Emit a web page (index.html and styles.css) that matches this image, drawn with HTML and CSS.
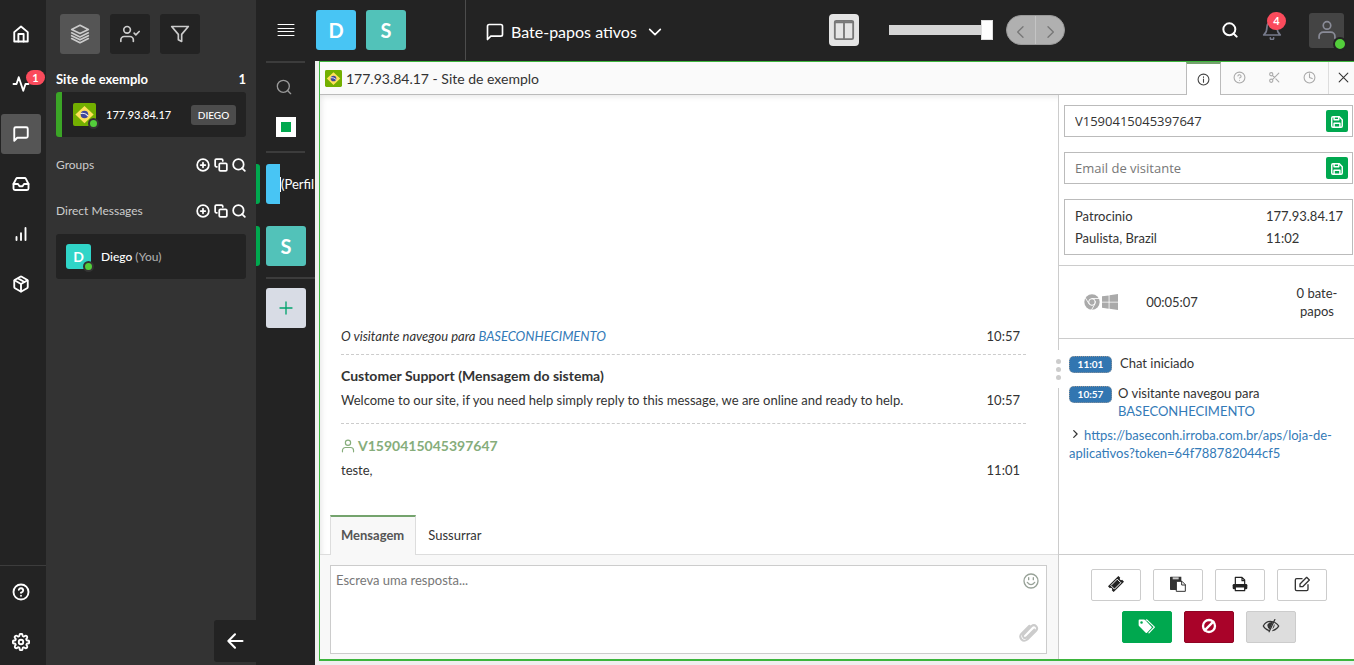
FILE: index.html
```html
<!DOCTYPE html>
<html lang="pt">
<head>
<meta charset="utf-8">
<title>Bate-papos ativos</title>
<link rel="stylesheet" href="styles.css">
</head>
<body>
<svg class="defs" aria-hidden="true">
  <symbol id="home" viewBox="0 0 24 24"><path d="M3 9.500l9-7.500 9 7.500V22H3z"/><path d="M8.500 22V12h7v10"/></symbol>
  <symbol id="activity" viewBox="0 0 24 24"><path d="M22 12h-4l-3 9L9 3l-3 9H2"/></symbol>
  <symbol id="chat" viewBox="0 0 24 24"><path d="M21 15a2 2 0 0 1-2 2H7l-4 4V5a2 2 0 0 1 2-2h14a2 2 0 0 1 2 2z"/></symbol>
  <symbol id="inbox" viewBox="0 0 24 24"><path d="M22 12h-6l-2 3h-4l-2-3H2"/><path d="M5.450 5.110L2 12v6a2 2 0 0 0 2 2h16a2 2 0 0 0 2-2v-6l-3.450-6.890A2 2 0 0 0 16.760 4H7.240a2 2 0 0 0-1.790 1.110z"/></symbol>
  <symbol id="bars" viewBox="0 0 24 24"><path d="M18 20V4M12 20v-9M6 20v-4"/></symbol>
  <symbol id="box" viewBox="0 0 24 24"><path d="M16.500 9.400l-9-5.190M21 16V8a2 2 0 0 0-1-1.730l-7-4a2 2 0 0 0-2 0l-7 4A2 2 0 0 0 3 8v8a2 2 0 0 0 1 1.730l7 4a2 2 0 0 0 2 0l7-4A2 2 0 0 0 21 16z"/><path d="M3.270 6.960L12 12.010l8.730-5.050M12 22.080V12"/></symbol>
  <symbol id="help" viewBox="0 0 24 24"><circle cx="12" cy="12" r="10"/><path d="M9.090 9a3 3 0 0 1 5.830 1c0 2-3 3-3 3M12 17h.010"/></symbol>
  <symbol id="gear" viewBox="0 0 24 24"><circle cx="12" cy="12" r="3"/><path d="M19.400 15a1.650 1.650 0 0 0 .33 1.820l.06.06a2 2 0 1 1-2.830 2.830l-.06-.06a1.650 1.650 0 0 0-2.800 1.170V21a2 2 0 0 1-4 0v-.09a1.650 1.650 0 0 0-2.900-1.260l-.06.06a2 2 0 1 1-2.830-2.830l.06-.06A1.650 1.650 0 0 0 3.090 14H3a2 2 0 0 1 0-4h.09a1.650 1.650 0 0 0 1.260-2.900l-.06-.06a2 2 0 1 1 2.830-2.830l.06.06A1.650 1.650 0 0 0 10 3.090V3a2 2 0 0 1 4 0v.09a1.650 1.650 0 0 0 2.820 1.180l.06-.06a2 2 0 1 1 2.830 2.830l-.06.06A1.650 1.650 0 0 0 20.910 10H21a2 2 0 0 1 0 4h-.09a1.650 1.650 0 0 0-1.510 1z"/></symbol>
  <symbol id="layers" viewBox="0 0 24 24"><path d="M12 1.500L2 6.500l10 5 10-5zM2 17.500l10 5 10-5M2 10.500l10 5 10-5M2 14l10 5 10-5"/></symbol>
  <symbol id="usercheck" viewBox="0 0 24 24"><path d="M16 21v-2a4 4 0 0 0-4-4H5a4 4 0 0 0-4 4v2"/><circle cx="8.500" cy="7" r="4"/><path d="M17 11l2 2 4-4"/></symbol>
  <symbol id="filter" viewBox="0 0 24 24"><path d="M22 3H2l8 9.460V19l4 2v-8.540z"/></symbol>
  <symbol id="pluscircle" viewBox="0 0 24 24"><circle cx="12" cy="12" r="10"/><path d="M12 8v8M8 12h8"/></symbol>
  <symbol id="copy" viewBox="0 0 24 24"><rect x="9" y="9" width="13" height="13" rx="2"/><path d="M5 15H4a2 2 0 0 1-2-2V4a2 2 0 0 1 2-2h9a2 2 0 0 1 2 2v1"/></symbol>
  <symbol id="search" viewBox="0 0 24 24"><circle cx="11" cy="11" r="9"/><path d="M22 22l-4.700-4.700"/></symbol>
  <symbol id="left" viewBox="0 0 24 24"><path d="M21 12H4M12 20l-8-8 8-8"/></symbol>
  <symbol id="menu" viewBox="0 0 18 14"><path d="M1 1.500h16M1 5.500h16M1 8.500h16M1 12.500h16"/></symbol>
  <symbol id="down" viewBox="0 0 24 24"><path d="M4 8l8 8 8-8"/></symbol>
  <symbol id="prev" viewBox="0 0 24 24"><path d="M15 4l-8 8 8 8"/></symbol>
  <symbol id="next" viewBox="0 0 24 24"><path d="M9 4l8 8-8 8"/></symbol>
  <symbol id="columns" viewBox="0 0 24 24"><rect x="2" y="2" width="20" height="20" rx="1.500"/><path d="M2 3.500h20M12 3v19"/></symbol>
  <symbol id="bell" viewBox="0 0 24 24"><path d="M18 8A6 6 0 0 0 6 8c0 7-2 8-4 10h20c-2-2-4-3-4-10M14 21.500a2 2 0 0 1-4 0"/></symbol>
  <symbol id="user" viewBox="0 0 24 24"><path d="M2.500 22v-2.500a5 5 0 0 1 5-5h9a5 5 0 0 1 5 5V22"/><circle cx="12" cy="6.500" r="4.500"/></symbol>
  <symbol id="info" viewBox="0 0 24 24"><circle cx="12" cy="12" r="10"/><path d="M12 17v-6M12 7v1"/></symbol>
  <symbol id="scissors" viewBox="0 0 24 24"><circle cx="6" cy="6" r="3"/><circle cx="6" cy="18" r="3"/><path d="M20 4L8.120 15.880M14.500 14.500L20 20M8.120 8.120L12 12"/></symbol>
  <symbol id="clock" viewBox="0 0 24 24"><circle cx="12" cy="12" r="10"/><path d="M12 5v7l5 2"/></symbol>
  <symbol id="close" viewBox="0 0 24 24"><path d="M4 4l16 16M20 4L4 20"/></symbol>
  <symbol id="plus" viewBox="0 0 24 24"><path d="M12 3v18M3 12h18"/></symbol>
  <symbol id="save" viewBox="0 0 24 24"><path d="M19 21H5a2 2 0 0 1-2-2V5a2 2 0 0 1 2-2h11l5 5v11a2 2 0 0 1-2 2z"/><path d="M17 21v-7H7v7M7 3v5h8V4"/></symbol>
  <symbol id="flag" viewBox="0 0 24 24"><rect width="24" height="24" rx="2" fill="#73af00"/><path d="M12 3l9.500 9-9.500 9-9.500-9z" fill="#ffe15a"/><circle cx="12" cy="12" r="4" fill="#41479b"/><path d="M8.300 10.900c2.500-.5 5.500.5 7.300 2.600" fill="none" stroke="#f5f5f5" stroke-width="1.200"/></symbol>
  <symbol id="chrome" viewBox="0 0 24 24"><circle cx="12" cy="12" r="11.500" fill="#aaa"/><circle cx="12" cy="12" r="5" fill="#aaa" stroke="#fff" stroke-width="1.500"/><path d="M12 6.800h10.500M7.500 14.600L2 5.800M16.500 14.600L11.500 23.500" stroke="#fff" stroke-width="1.300"/></symbol>
  <symbol id="windows" viewBox="0 0 24 24"><path fill="#aaa" d="M0 3.500l10-1.400v9.400H0zM11.200 1.900L24 0v11.500H11.200zM0 12.700h10v9.400L0 20.700zM11.200 12.700H24V24l-12.800-1.800z"/></symbol>
  <symbol id="ticket" viewBox="0 0 24 24"><g transform="rotate(-45 12 12)"><path fill="#222" d="M1 6h22v4a2 2 0 0 0 0 4v4H1v-4a2 2 0 0 0 0-4z"/><path d="M5.500 8.200h13v7.600h-13z" fill="none" stroke="#fff" stroke-width="1.400"/></g></symbol>
  <symbol id="paste" viewBox="0 0 24 24"><path fill="#333" d="M0 2q0-1 1-1h16v8h-6v12H1q-1 0-1-1z"/><path fill="#ccc" d="M4 2h9v3H4z"/><path fill="#fff" stroke="#333" stroke-width="1.500" d="M10 8h8l5 5v10H10zM17.500 8v5.500H23"/></symbol>
  <symbol id="printer" viewBox="0 0 24 24"><path fill="#fff" stroke="#222" stroke-width="1.800" d="M5 13V2h10l4 4v7M15 2v5h4"/><rect x="1" y="12" width="22" height="8" rx="2" fill="#222"/><path fill="#fff" stroke="#222" stroke-width="1.800" d="M5 16.500h14V22H5z"/></symbol>
  <symbol id="edit" viewBox="0 0 24 24"><path d="M12 4H4a2 2 0 0 0-2 2v14a2 2 0 0 0 2 2h15a2 2 0 0 0 2-2v-7M9 16v-4L19 2l4 4-10 10z"/></symbol>
  <symbol id="tags" viewBox="0 0 28 24"><path fill="#fff" fill-rule="evenodd" d="M1 3.500Q1 2 2.500 2H9q1.500 0 2.500 1l9.500 10q1 1 0 2l-7 7.500q-1 1-2 0L2 12.500Q1 11.500 1 10zM5.500 4.500a2 2 0 1 0 0 4 2 2 0 0 0 0-4z"/><path fill="none" stroke="#fff" stroke-width="1.800" d="M13 2.500q1 0 2 1l10.500 10.300-8.500 9"/></symbol>
  <symbol id="ban" viewBox="0 0 24 24"><circle cx="12" cy="12" r="9"/><path d="M18.500 5.500l-13 13"/></symbol>
  <symbol id="eyeoff" viewBox="0 0 28 24"><path fill="none" stroke="#333" stroke-width="2" d="M17 5.500Q7 3 2 12q3 5.500 9 7M20 6.500q4 2 6 5.500-3 5.500-9 7M20 2L11 21"/><path fill="#333" d="M17 6L12 17Q7.500 14 8.500 9.500 12 5 17 6zM19 9q2 4-3 8z"/></symbol>
  <symbol id="smile" viewBox="0 0 24 24"><circle cx="12" cy="12" r="10.500"/><path d="M6.500 14q5.500 7 11 0M8.500 7v3M15.500 7v3"/></symbol>
  <symbol id="clip" viewBox="0 0 24 24"><path d="M18.500 9l-9.500 9.500q-2 1.500-3.500 0-1.500-2 0-3.500L15 5q3-2.500 5.500 0 2.500 3 0 5.500L10 21q-4 3-7 0-3-3.500 0-7L12.500 4.500"/></symbol>
</svg>

<div class="app">
  <nav class="rail" aria-label="Principal">
    <button aria-label="Início"><svg class="i18"><use href="#home"/></svg></button>
    <button aria-label="Atividade"><svg class="i18"><use href="#activity"/></svg><span class="badge one">1</span></button>
    <button class="current" aria-label="Bate-papos"><svg class="i18"><use href="#chat"/></svg></button>
    <button aria-label="Entrada"><svg class="i18"><use href="#inbox"/></svg></button>
    <button aria-label="Relatórios"><svg class="i18"><use href="#bars"/></svg></button>
    <button aria-label="Pacotes"><svg class="i18"><use href="#box"/></svg></button>
    <div class="railend">
      <button aria-label="Ajuda"><svg class="i18"><use href="#help"/></svg></button>
      <button aria-label="Configurações"><svg class="i18"><use href="#gear"/></svg></button>
    </div>
  </nav>

  <aside class="panel">
    <div class="filters">
      <button class="on" aria-label="Todos"><svg class="i20"><use href="#layers"/></svg></button>
      <button aria-label="Meus"><svg class="i20"><use href="#usercheck"/></svg></button>
      <button aria-label="Filtrar"><svg class="i20"><use href="#filter"/></svg></button>
    </div>
    <div class="site"><span>Site de exemplo</span><span>1</span></div>
    <div class="visitor">
      <span class="mark"><svg class="flag24"><use href="#flag"/></svg><i class="dot"></i></span>
      <span class="ip">177.93.84.17</span><span class="agent">DIEGO</span>
    </div>
    <div class="section"><span>Groups</span>
      <div><button aria-label="Adicionar"><svg><use href="#pluscircle"/></svg></button><button aria-label="Copiar"><svg><use href="#copy"/></svg></button><button aria-label="Buscar"><svg><use href="#search"/></svg></button></div></div>
    <div class="section second"><span>Direct Messages</span>
      <div><button aria-label="Adicionar"><svg><use href="#pluscircle"/></svg></button><button aria-label="Copiar"><svg><use href="#copy"/></svg></button><button aria-label="Buscar"><svg><use href="#search"/></svg></button></div></div>
    <div class="direct"><span class="mark letter">D<i class="dot"></i></span><span>Diego <em>(You)</em></span></div>
    <button class="collapse" aria-label="Recolher"><svg class="i20"><use href="#left"/></svg></button>
  </aside>

  <div class="work">
    <header class="top">
      <div class="brand">
        <button class="bare" aria-label="Menu"><svg class="menuicon"><use href="#menu"/></svg></button>
        <button class="tile blue">D</button><button class="tile teal">S</button>
      </div>
      <button class="bare heading"><svg class="i20"><use href="#chat"/></svg><span>Bate-papos ativos</span><svg class="i16"><use href="#down"/></svg></button>
      <div class="viewtools">
        <button class="colbtn" aria-label="Colunas"><svg class="i22"><use href="#columns"/></svg></button>
        <input type="range" class="slider" value="100" aria-label="Largura">
        <div class="pill"><button aria-label="Anterior"><svg class="i16"><use href="#prev"/></svg></button><button aria-label="Próximo"><svg class="i16"><use href="#next"/></svg></button></div>
      </div>
      <div class="account">
        <button class="bare" aria-label="Buscar"><svg class="i16 strong"><use href="#search"/></svg></button>
        <button class="bare bell" aria-label="Notificações"><svg class="i20"><use href="#bell"/></svg><span class="badge four">4</span></button>
        <button class="avatar" aria-label="Conta"><svg class="i20"><use href="#user"/></svg><i class="dot big"></i></button>
      </div>
    </header>

    <div class="below">
      <div class="strip">
        <hr>
        <button class="bare find" aria-label="Buscar"><svg class="i16"><use href="#search"/></svg></button>
        <input type="checkbox" class="tick" checked aria-label="Selecionar todos">
        <hr>
        <div class="row"><i></i><span class="chip"></span><span class="perfil">(Perfil</span></div>
        <div class="row"><i></i><button class="tile teal">S</button></div>
        <hr class="wide">
        <button class="add" aria-label="Adicionar"><svg><use href="#plus"/></svg></button>
      </div>

      <main class="window">
        <div class="titlebar">
          <svg class="flag17"><use href="#flag"/></svg><h1>177.93.84.17 - Site de exemplo</h1>
          <div class="tabs">
            <button class="active" aria-label="Informações"><svg><use href="#info"/></svg></button>
            <button aria-label="Ajuda"><svg><use href="#help"/></svg></button>
            <button aria-label="Atalhos"><svg><use href="#scissors"/></svg></button>
            <button aria-label="Histórico"><svg><use href="#clock"/></svg></button>
            <button class="x" aria-label="Fechar"><svg><use href="#close"/></svg></button>
          </div>
        </div>
        <div class="columns">
          <section class="conversation">
            <div class="log">
              <div class="msg"><p><em>O visitante navegou para <a href="#">BASECONHECIMENTO</a></em></p><time>10:57</time></div>
              <div class="msg"><div><strong>Customer Support (Mensagem do sistema)</strong><p>Welcome to our site, if you need help simply reply to this message, we are online and ready to help.</p></div><time>10:57</time></div>
              <div class="msg"><div><strong class="who"><svg class="i14"><use href="#user"/></svg>V1590415045397647</strong><p>teste,</p></div><time>11:01</time></div>
            </div>
            <div class="modes"><button class="active">Mensagem</button><button>Sussurrar</button></div>
            <div class="composer">
              <div class="box"><textarea placeholder="Escreva uma resposta..." aria-label="Resposta"></textarea>
                <div class="extras"><button aria-label="Emoji"><svg class="i16"><use href="#smile"/></svg></button><button aria-label="Anexar"><svg class="i20 clip"><use href="#clip"/></svg></button></div></div>
            </div>
          </section>
          <aside class="details">
            <i class="grip"><b></b><b></b><b></b></i>
            <div class="fields">
              <div class="field"><input type="text" value="V1590415045397647" aria-label="Nome"><button aria-label="Salvar nome"><svg><use href="#save"/></svg></button></div>
              <div class="field"><input type="text" placeholder="Email de visitante" aria-label="Email"><button aria-label="Salvar email"><svg><use href="#save"/></svg></button></div>
              <div class="place"><span>Patrocinio Paulista, Brazil</span><span>177.93.84.17 11:02</span></div>
            </div>
            <div class="stats"><span class="client"><svg><use href="#chrome"/></svg><svg><use href="#windows"/></svg></span><span>00:05:07</span><span class="count">0 bate-papos</span></div>
            <div class="timeline">
              <div class="event first"><time>11:01</time><span>Chat iniciado</span></div>
              <div class="event"><time>10:57</time><span>O visitante navegou para <a href="#">BASECONHECIMENTO</a></span></div>
              <p class="url"><svg><use href="#next"/></svg><a href="#">https://baseconh.irroba.com.br/aps/loja-de-aplicativos?token=64f788782044cf5</a></p>
            </div>
            <div class="actions">
              <div><button aria-label="Ticket"><svg><use href="#ticket"/></svg></button><button aria-label="Colar"><svg><use href="#paste"/></svg></button><button aria-label="Imprimir"><svg><use href="#printer"/></svg></button><button aria-label="Editar"><svg><use href="#edit"/></svg></button></div>
              <div><button class="green" aria-label="Etiquetas"><svg class="w18"><use href="#tags"/></svg></button><button class="red" aria-label="Bloquear"><svg class="bold"><use href="#ban"/></svg></button><button class="grey" aria-label="Ocultar"><svg class="w18"><use href="#eyeoff"/></svg></button></div>
            </div>
          </aside>
        </div>
      </main>
    </div>
  </div>
</div>
</body>
</html>
```
FILE: styles.css
```css
* { box-sizing: border-box; }
body { margin: 0; font: 13px/18px Lato, "Open Sans", sans-serif; color: #333; background: #232323; }
.defs { position: absolute; width: 0; height: 0; }
svg { width: 16px; height: 16px; flex: none; display: block; fill: none; stroke: currentColor; stroke-width: 2; stroke-linecap: round; stroke-linejoin: round; }
symbol [fill]:not([stroke]) { stroke: none; }
.i14 { width: 14px; height: 14px; }
.i16 { width: 16px; height: 16px; }
.i18 { width: 18px; height: 18px; }
.i20 { width: 20px; height: 20px; }
.i22 { width: 22px; height: 22px; }
.strong { stroke-width: 3; }
.menuicon { width: 18px; height: 14px; stroke-width: 1; }
button { font: inherit; color: inherit; border: 0; padding: 0; margin: 0; background: none; display: flex; align-items: center; justify-content: center; cursor: pointer; }
a { color: #337ab7; text-decoration: none; }
p, h1 { margin: 0; font-weight: 400; }

/* Far left navigation */
.app { display: flex; height: 100vh; overflow: hidden; }
.rail { width: 46px; flex: none; display: flex; flex-direction: column; gap: 10px; padding-top: 14px; color: #fff; background: #232323; }
.rail button { position: relative; width: 40px; height: 40px; margin-left: 1px; border-radius: 3px; }
.rail svg { stroke-width: 2.500; }
.rail .current { background: #555; }
.railend { margin-top: auto; border-top: 1px solid #3c3c3c; padding: 6px 0 3px; display: flex; flex-direction: column; gap: 10px; }
.badge { position: absolute; background: #fb4b5c; color: #fff; font-weight: 700; font-size: 11px; line-height: 15px; border-radius: 10px; text-align: center; }
.badge.one { left: 25px; top: 6px; width: 19px; }
.badge.four { left: 5px; top: -8px; width: 19px; line-height: 18px; }

/* Chats panel */
.panel { position: relative; width: 210px; flex: none; background: #333; padding: 14px 10px 0; color: #fff; }
.filters { display: flex; gap: 10px; padding-left: 4px; }
.filters button { width: 40px; height: 40px; background: #232323; border-radius: 3px; color: #ccc; }
.filters .on { background: #555; }
.site { display: flex; justify-content: space-between; font-weight: 700; font-size: 13px; line-height: 18px; margin-top: 16px; }
.visitor, .direct { display: flex; align-items: center; height: 45px; background: #232323; border-radius: 3px; font-size: 12px; }
.visitor { margin-top: 4px; border-left: 6px solid #3ba526; padding: 0 10px 0 11px; font-size: 11px; font-weight: 500; }
.mark { position: relative; display: block; }
.flag24 { width: 23px; height: 23px; }
.dot { position: absolute; right: -3px; bottom: -3px; width: 11px; height: 11px; border: 2px solid #333; border-radius: 50%; background: #53ce3b; }
.ip { margin-left: 10px; flex: 1; }
.agent { background: #4c4c4c; border-radius: 3px; font-size: 10px; line-height: 20px; width: 45px; text-align: center; }
.section { display: flex; justify-content: space-between; align-items: center; color: #ccc; font-size: 12px; margin-top: 19px; }
.section.second { margin-top: 28px; }
.section div { display: flex; gap: 4px; color: #fff; }
.section svg { width: 14px; height: 14px; stroke-width: 3; }
.direct { margin-top: 14px; padding-left: 10px; gap: 10px; font-weight: 500; }
.direct em { font-style: normal; color: #aaa; }
.letter { width: 25px; line-height: 25px; background: #30d5c8; border-radius: 3px; text-align: center; font-size: 14px; font-weight: 700; }
.collapse { position: absolute; right: 0; bottom: 3px; width: 42px; height: 42px; background: #232323; border-radius: 3px 0 0 3px; }
.collapse svg { stroke-width: 2.500; }

/* Top bar */
.work { flex: 1; min-width: 0; display: flex; flex-direction: column; }
.top { display: flex; align-items: center; height: 61px; flex: none; color: #fff; padding: 0 10px 1px 0; }
.brand { display: flex; align-items: center; gap: 10px; width: 210px; height: 60px; border-right: 1px solid #4c4c4c; padding-left: 21px; }
.brand .bare { margin-right: 11px; }
.tile { width: 40px; height: 40px; border-radius: 3px; color: #fff; font-size: 20px; font-weight: 700; }
.blue { background: #48c5f4; }
.teal { background: #52c2b9; }
.heading { gap: 6px; padding-left: 19px; font-size: 16px; padding-top: 3px; }
.heading .i16 { margin-left: 4px; stroke-width: 2.500; }
.viewtools { display: flex; align-items: center; margin-left: 166px; }
.colbtn { width: 30px; height: 32px; border-radius: 4px; background: #e4e4e4; color: #777; }
.slider { appearance: none; width: 104px; height: 20px; margin: 0 13px 0 30px; background: linear-gradient(#d5d5d5, #d5d5d5) center / 100% 10px no-repeat; }
.slider::-webkit-slider-thumb { appearance: none; width: 12px; height: 20px; background: #fff; border: 1px solid #ddd; }
.pill { display: flex; border: 1px solid #999; border-radius: 16px; background: #b0b0b0; color: #777; }
.pill button { width: 28px; height: 28px; padding-top: 4px; }
.pill button + button { width: 29px; border-left: 1px solid #c4c4c4; }
.account { display: flex; align-items: center; margin-left: auto; }
.bell { position: relative; margin-left: 24px; color: #777b8c; }
.avatar { position: relative; width: 35px; height: 35px; margin-left: 27px; border-radius: 3px; background: #444; color: #8a8c98; }
.dot.big { width: 14px; height: 14px; right: -3px; bottom: -3px; border-color: #232323; }

/* Profile strip */
.below { flex: 1; min-height: 0; display: flex; background: #232323; }
.top, .strip { position: relative; z-index: 1; background: #232323; }
.strip { width: 59px; flex: none; overflow: hidden; display: flex; flex-direction: column; }
.strip hr { width: 39px; height: 2px; margin: 0 0 0 10px; border: 0; background: #3c3c3c; flex: none; }
.strip .wide { width: 49px; margin-top: 11px; }
.find { width: 16px; margin: 16px 0 0 20px; color: #999; }
.tick { appearance: none; width: 20px; height: 20px; margin: 22px 0 14px 20px; border: 5px solid #fff; background: #00a84f; flex: none; }
.row { display: flex; align-items: center; height: 40px; margin-top: 11px; white-space: nowrap; color: #fff; flex: none; }
.row + .row { margin-top: 22px; }
.row i { width: 4px; height: 40px; margin-right: 6px; background: #00a84f; border-radius: 0 3px 3px 0; flex: none; }
.chip { width: 14px; height: 40px; background: #48c5f4; border-radius: 3px 0 0 3px; flex: none; }
.perfil { border-left: 1px solid #fff; line-height: 15px; }
.add { width: 40px; height: 40px; margin: 9px 0 0 10px; background: #d8dce5; color: #00a36c; border-radius: 3px; flex: none; }

/* Chat window */
.window { flex: 1; min-width: 0; display: flex; flex-direction: column; background: #fff; border: solid #3db53d; border-width: 1px 0 2px 1px; margin: 0 0 4px 4px; outline: 4px solid #efefef; }
.titlebar { display: flex; align-items: center; height: 33px; flex: none; padding-left: 5px; background: #fafafa; border-bottom: 1px solid #bbb; }
.flag17 { width: 17px; height: 17px; }
.titlebar h1 { margin-left: 4px; padding-top: 1px; font-size: 14px; }
.tabs { display: flex; margin-left: auto; height: 33px; color: #aaa; }
.tabs button { width: 35px; height: 32px; }
.tabs svg { width: 13px; height: 13px; }
.tabs .active { height: 33px; margin-right: 1px; background: #fff; color: #444; border: 1px solid #bbb; border-top: 2px solid #74a36d; border-bottom: 0; }
.tabs .x { width: 26px; color: #333; border-left: 1px solid #ddd; padding-left: 4px; margin-left: 1px; }
.columns { flex: 1; min-height: 0; display: flex; }
.conversation { flex: 1; min-width: 0; display: flex; flex-direction: column; box-shadow: inset 4px 4px 6px -3px #e4e4e4; }
.log { flex: 1; display: flex; flex-direction: column; justify-content: flex-end; padding: 0 32px 21px 21px; }
.msg { display: flex; justify-content: space-between; align-items: flex-end; gap: 20px; padding: 11px 6px 14px 0; border-bottom: 1px dashed #ccc; line-height: 18px; }
.msg:first-child { padding-bottom: 9px; }
.msg:last-child { border: 0; padding-top: 12px; padding-bottom: 15px; }
.msg strong { display: block; font-size: 14px; line-height: 20px; margin-bottom: 5px; }
.msg .who { display: flex; align-items: center; gap: 3px; color: #86ad7b; }
.modes { display: flex; height: 40px; flex: none; padding-left: 10px; border-bottom: 1px solid #ddd; }
.modes button { height: 40px; padding: 0 12px; }
.modes .active { padding: 0 11px 2px 10px; background: #f8f8f8; border: 1px solid #ddd; border-width: 2px 1px 0; border-top-color: #74a36d; font-weight: 700; color: #555; }
.composer { flex: none; background: #f8f8f8; padding: 10px 11px 5px 10px; }
.box { display: flex; height: 89px; background: #fff; border: 1px solid #ccc; }
textarea { flex: 1; border: 0; outline: 0; resize: none; padding: 5px; background: none; font: 13px/18px Lato, sans-serif; color: #333; }
textarea::placeholder { color: #777; }
.extras { display: flex; flex-direction: column; justify-content: space-between; align-items: flex-end; padding: 7px 7px 11px; color: #98a298; }
.extras .clip { color: #ccc; stroke-width: 2.500; }

/* Visitor details */
.details { position: relative; width: 296px; flex: none; border-left: 1px solid #ccc; display: flex; flex-direction: column; }
.grip { position: absolute; left: -5px; top: 255px; width: 8px; height: 38px; background: #fff; display: flex; flex-direction: column; align-items: center; justify-content: center; gap: 3px; }
.grip b { width: 5px; height: 5px; border-radius: 50%; background: #ccc; }
.fields { padding: 10px 1px 10px 5px; display: flex; flex-direction: column; gap: 15px; border-bottom: 1px solid #ccc; }
.field { display: flex; align-items: center; height: 32px; border: 1px solid #bbb; padding: 0 4px 0 10px; }
.field input { flex: 1; min-width: 0; padding: 0; border: 0; outline: 0; font: 13px/18px "Open Sans", sans-serif; color: #333; }
.field input::placeholder { color: #777; }
.field button { width: 22px; height: 22px; border-radius: 2px; background: #00a84f; color: #fff; padding-top: 2px; }
.field svg { width: 14px; height: 14px; stroke-width: 2.500; }
.place { display: flex; justify-content: space-between; border: 1px solid #bbb; padding: 5px 10px; line-height: 22px; }
.place span:first-child { width: 90px; }
.place span:last-child { width: 76px; }
.stats { display: flex; align-items: center; justify-content: space-between; height: 73px; flex: none; padding: 0 8px 0 25px; border-bottom: 1px solid #ccc; }
.client { display: flex; gap: 2px; }
.client svg { stroke: none; }
.count { width: 58px; text-align: center; }
.stats span:nth-child(2) { margin-right: 62px; }
.timeline { flex: 1; padding: 15px 10px 0; }
.event { display: flex; align-items: flex-start; gap: 6px; margin-bottom: 6px; }
.event.first { gap: 8px; margin-bottom: 11px; }
.event time { width: 43px; flex: none; margin-top: 2px; border: 1px dotted #999; border-radius: 5px; background: #3276b1; color: #fff; font-weight: 700; font-size: 10px; line-height: 15px; text-align: center; }
.event span { width: 150px; }
.url svg { display: inline-block; width: 10px; height: 10px; margin: 0 4px 1px 1px; stroke: #333; stroke-width: 3; }
.url a { overflow-wrap: anywhere; }
.actions { flex: none; display: flex; flex-direction: column; gap: 10px; height: 105px; padding: 14px 0 0 4px; border-top: 1px solid #ccc; }
.actions div { display: flex; justify-content: center; gap: 12px; }
.actions button { width: 50px; height: 32px; border: 1px solid #ccc; border-radius: 2px; color: #333; background: #fff; padding-bottom: 2px; }
.actions .green { background: #00a84f; border-color: #00a84f; }
.actions .red { background: #a90329; border-color: #900323; color: #fff; }
.actions .grey { background: #ddd; }
.actions .w18 { width: 18px; height: 16px; }
.actions .bold { stroke-width: 3.500; }
```
